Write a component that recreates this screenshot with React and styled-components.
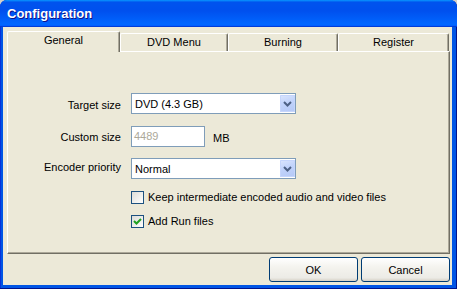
import React from 'react';
import styled, { createGlobalStyle } from 'styled-components';

const GlobalStyle = createGlobalStyle`
  html, body {
    margin: 0;
    padding: 0;
    background: #d4d0c8;
  }
  body {
    font-family: "Liberation Sans", Arial, sans-serif;
    font-size: 11px;
    color: #000;
  }
`;

const Window = styled.div`
  width: 457px;
  height: 289px;
  box-sizing: border-box;
  display: flex;
  flex-direction: column;
  background: #0055e5;
  border-radius: 7px 7px 0 0;
  overflow: hidden;
  box-shadow: inset -1px -1px #00138c, inset 1px 1px #0831d9;
`;

const TitleBar = styled.div`
  height: 27px;
  flex: none;
  display: flex;
  align-items: center;
  padding: 0 0 1px 7px;
  box-sizing: border-box;
  background: linear-gradient(180deg, #0997ff, #0053ee 8%, #0050ee 40%, #06f 88%, #06f 93%, #005bff 95%, #003dd7 96%, #003dd7);
  color: #fff;
  font-family: "Liberation Sans", Arial, sans-serif;
  font-weight: bold;
  font-size: 13px;
  text-shadow: 1px 1px #0f1089;
`;

const Client = styled.div`
  flex: 1;
  display: flex;
  flex-direction: column;
  margin: 0 5px 4px 3px;
  padding: 4px 2px 3px 4px;
  background: #ece9d8;
  min-height: 0;
`;

const TabStrip = styled.div`
  display: flex;
  align-items: flex-end;
  height: 21px;
  margin-bottom: -1px;
  position: relative;
  z-index: 1;
  flex: none;
`;

const Tab = styled.div`
  width: ${p => p.$width}px;
  height: ${p => (p.$active ? 21 : 18)}px;
  margin-bottom: ${p => (p.$active ? 0 : 1)}px;
  box-sizing: border-box;
  background: #ece9d8;
  border-top: 1px solid #fff;
  border-left: 1px solid #fff;
  border-right: 1px solid #716f64;
  box-shadow: inset -1px 0 #aca899;
  border-radius: 2px 2px 0 0;
  text-align: center;
  line-height: 13px;
  padding-top: 2px;
`;

const Panel = styled.div`
  flex: 1;
  box-sizing: border-box;
  border: 1px solid;
  border-color: #fff #716f64 #716f64 #fff;
  box-shadow: inset -1px -1px #aca899;
  padding-top: 41px;
`;

const Form = styled.div`
  display: grid;
  grid-template-columns: 113px auto;
  grid-template-rows: 21px 22px 21px 14px 13px;
  column-gap: 10px;
  row-gap: 11px;
  align-items: end;
`;

const Label = styled.div`
  text-align: right;
  align-self: start;
  line-height: 13px;
  padding-top: ${p => p.$pad}px;
  white-space: nowrap;
`;

const Select = styled.div`
  width: 165px;
  height: 21px;
  box-sizing: border-box;
  display: flex;
  background: #fff;
  border: 1px solid #7f9db9;
`;

const SelectValue = styled.div`
  flex: 1;
  padding: 4px 0 0 3px;
  line-height: 13px;
`;

const DropButton = styled.div`
  width: 15px;
  height: 17px;
  margin: 1px 0;
  border-radius: 1px;
  background: linear-gradient(160deg, #dce6fd, #c1d3fb 45%, #b4c8f6);
  box-shadow: inset 0 0 0 1px #c5d5fc;
  display: flex;
  align-items: center;
  justify-content: center;
`;

const InlineRow = styled.div`
  display: flex;
  align-items: flex-start;
  gap: 8px;
`;

const TextInput = styled.div`
  width: 74px;
  height: 21px;
  box-sizing: border-box;
  border: 1px solid #7f9db9;
  background: #fff;
  color: #aca899;
  padding: 3px 0 0 2px;
  line-height: 13px;
`;

const Unit = styled.div`
  padding-top: 6px;
  line-height: 13px;
`;

const CheckRow = styled.label`
  grid-column: 2;
  display: flex;
  align-items: center;
  gap: 4px;
  line-height: 13px;
  white-space: nowrap;
`;

const Box = styled.div`
  width: 13px;
  height: 13px;
  box-sizing: border-box;
  border: 1px solid #1c5180;
  background: linear-gradient(135deg, #dcdcd7, #fff);
  display: flex;
  align-items: center;
  justify-content: center;
  flex: none;
`;

const ButtonRow = styled.div`
  flex: none;
  display: flex;
  justify-content: flex-end;
  gap: 3px;
  margin-top: 3px;
`;

const Button = styled.button`
  width: 89px;
  height: 25px;
  box-sizing: border-box;
  border: 1px solid #003c74;
  border-radius: 3px;
  background: linear-gradient(180deg, #fff, #f4f3ee 40%, #ecebe6 86%, #d6d0c5);
  font-family: "Liberation Sans", Arial, sans-serif;
  font-size: 11px;
  color: #000;
  padding: 0;
`;

const Chevron = () => (
  <svg width="9" height="6" viewBox="0 0 9 6">
    <path d="M1 1 L4.5 4.5 L8 1" fill="none" stroke="#4d6185" strokeWidth="2" />
  </svg>
);

const Check = () => (
  <svg width="9" height="9" viewBox="0 0 9 9">
    <path d="M1 4 L3.5 6.5 L8 2" fill="none" stroke="#21a121" strokeWidth="2" />
  </svg>
);

const tabs = [
  { name: 'General', width: 113, active: true },
  { name: 'DVD Menu', width: 108 },
  { name: 'Burning', width: 110 },
  { name: 'Register', width: 111 },
];

export default function App() {
  return (
    <>
      <GlobalStyle />
      <Window>
        <TitleBar>Configuration</TitleBar>
        <Client>
          <TabStrip>
            {tabs.map(t => (
              <Tab key={t.name} $width={t.width} $active={t.active}>{t.name}</Tab>
            ))}
          </TabStrip>
          <Panel>
            <Form>
              <Label $pad={6}>Target size</Label>
              <Select>
                <SelectValue>DVD (4.3 GB)</SelectValue>
                <DropButton><Chevron /></DropButton>
              </Select>

              <Label $pad={6}>Custom size</Label>
              <InlineRow>
                <TextInput>4489</TextInput>
                <Unit>MB</Unit>
              </InlineRow>

              <Label $pad={3}>Encoder priority</Label>
              <Select>
                <SelectValue>Normal</SelectValue>
                <DropButton><Chevron /></DropButton>
              </Select>

              <CheckRow>
                <Box />
                Keep intermediate encoded audio and video files
              </CheckRow>
              <CheckRow>
                <Box><Check /></Box>
                Add Run files
              </CheckRow>
            </Form>
          </Panel>
          <ButtonRow>
            <Button>OK</Button>
            <Button>Cancel</Button>
          </ButtonRow>
        </Client>
      </Window>
    </>
  );
}
